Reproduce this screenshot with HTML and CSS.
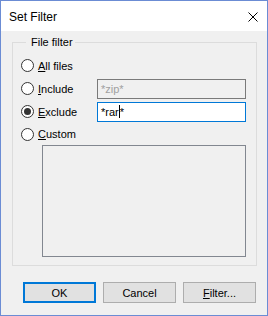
FILE: index.html
```html
<!DOCTYPE html>
<html>
<head>
<meta charset="utf-8">
<link rel="stylesheet" href="styles.css">
</head>
<body>
<div class="window">
  <div class="titlebar">
    <span class="title">Set Filter</span>
    <svg class="close" width="10" height="10" viewBox="0 0 10 10"><path d="M0.5 0.5L9.5 9.5M9.5 0.5L0.5 9.5" stroke="#000" stroke-width="1" fill="none"/></svg>
  </div>
  <div class="content">
    <fieldset class="group">
      <legend class="legend">File filter</legend>
      <div class="rows">
        <label class="opt"><span class="radio"></span><span><u>A</u>ll files</span></label>
        <span></span>
        <label class="opt"><span class="radio"></span><span><u>I</u>nclude</span></label>
        <div class="edit disabled">*zip*</div>
        <label class="opt"><span class="radio checked"></span><span><u>E</u>xclude</span></label>
        <div class="edit focused">*rar<span class="caret"></span>*</div>
        <label class="opt last"><span class="radio"></span><span><u>C</u>ustom</span></label>
        <span></span>
      </div>
      <div class="listbox"></div>
    </fieldset>
    <div class="buttons">
      <button class="btn default">OK</button>
      <button class="btn">Cancel</button>
      <button class="btn"><u>F</u>ilter...</button>
    </div>
  </div>
</div>
</body>
</html>
```
FILE: styles.css
```css
html, body {
  margin: 0;
  padding: 0;
}
body {
  width: 268px;
  height: 316px;
  font-family: "Segoe UI", "Liberation Sans", Arial, sans-serif;
  font-size: 11px;
  color: #000;
}
.window {
  width: 268px;
  height: 316px;
  box-sizing: border-box;
  border: 1px solid #6b8cd4;
  display: flex;
  flex-direction: column;
  background: #f0f0f0;
}
.titlebar {
  height: 30px;
  background: #fff;
  display: flex;
  align-items: center;
  justify-content: space-between;
  padding: 0 9px 0 8px;
  flex: none;
}
.title {
  font-size: 12px;
  padding-top: 1px;
}
.close {
  display: block;
  margin-top: 1px;
}
.content {
  flex: 1;
  padding: 4px 0 0 11px;
}
.group {
  box-sizing: border-box;
  width: 245px;
  height: 231px;
  margin: 0;
  padding: 5px 10px 0 8px;
  border: 1px solid #dcdcdc;
  min-width: 0;
}
.legend {
  margin-left: 5px;
  padding: 0 2px 0 5px;
  line-height: 14px;
  font-size: 11px;
}
.rows {
  display: grid;
  grid-template-columns: 76px 149px;
  grid-template-rows: 23px 23px 23px 22px;
  align-items: center;
}
.opt {
  display: flex;
  align-items: center;
  gap: 4px;
  height: 100%;
}
.radio {
  width: 13px;
  height: 13px;
  box-sizing: border-box;
  border: 1px solid #333;
  border-radius: 50%;
  background: #fff;
  display: flex;
  align-items: center;
  justify-content: center;
  flex: none;
}
.radio.checked::after {
  content: "";
  width: 7px;
  height: 7px;
  border-radius: 50%;
  background: #333;
}
.edit {
  box-sizing: border-box;
  height: 20px;
  border: 1px solid #7a7a7a;
  padding: 0 3px;
  line-height: 18px;
  background: #fff;
}
.edit.disabled {
  background: #f0f0f0;
  border-color: #7a7a7a;
  color: #a0a0a0;
}
.edit.focused {
  border-color: #0078d7;
}
.caret {
  display: inline-block;
  width: 1px;
  height: 13px;
  background: #000;
  vertical-align: -2px;
}
.listbox {
  box-sizing: border-box;
  margin-left: 21px;
  width: 204px;
  height: 112px;
  border: 1px solid #828790;
  background: #f0f0f0;
}
.buttons {
  display: flex;
  gap: 7px;
  margin: 16px 0 0 11px;
}
.btn {
  box-sizing: border-box;
  width: 73px;
  height: 21px;
  border: 1px solid #adadad;
  background: #e1e1e1;
  font-family: inherit;
  font-size: 11px;
  color: #000;
  padding: 0;
  margin: 0;
}
.btn.default {
  border: 2px solid #0078d7;
}
```
